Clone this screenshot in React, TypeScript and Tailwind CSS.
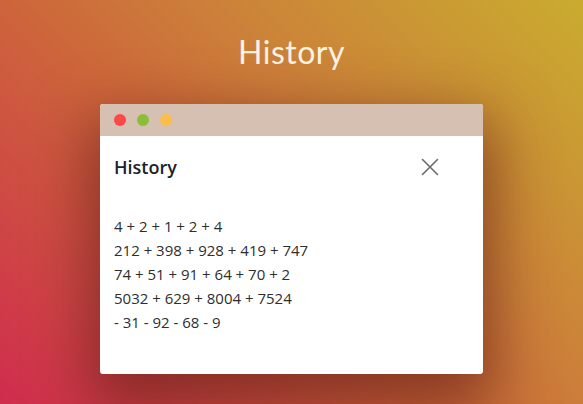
import React from "react";

const lines = [
  "4 + 2 + 1 + 2 + 4",
  "212 + 398 + 928 + 419 + 747",
  "74 + 51 + 91 + 64 + 70 + 2",
  "5032 + 629 + 8004 + 7524",
  "- 31 - 92 - 68 - 9",
];

export default function App() {
  return (
    <div
      className="w-full h-[404px] overflow-hidden flex flex-col items-center bg-[linear-gradient(45deg,#d02c4d_0%,#cd6a3a_45%,#cc7e3a_60%,#c9ac2f_100%)]"
      style={{ fontFamily: '"Open Sans", "Noto Sans", sans-serif' }}
    >
      <div
        className="pt-[33px] text-[32px] leading-[38px] text-[#fbf3e6] tracking-[0.5px]"
        style={{ fontFamily: 'Lato, "Noto Sans", sans-serif' }}
      >
        History
      </div>
      <div className="mt-[33px] w-[383px] h-[270px] rounded-[3px] overflow-hidden bg-white flex flex-col shadow-[0_25px_60px_10px_rgba(90,25,20,0.6)]">
        <div className="h-[32px] bg-[#d5c0b1] flex items-center pl-[14px] gap-[11px]">
          <span className="w-[12px] h-[12px] rounded-full bg-[#fb4848]" />
          <span className="w-[12px] h-[12px] rounded-full bg-[#8dbd37]" />
          <span className="w-[12px] h-[12px] rounded-full bg-[#fdbd4b]" />
        </div>
        <div className="flex-1 flex flex-col pl-[14px] pr-[44px] pt-[19px]">
          <div className="flex items-center justify-between h-[24px]">
            <span className="text-[18px] leading-[24px] font-semibold text-[#1c2229]">History</span>
            <svg width="18" height="18" viewBox="0 0 18 18" fill="none" stroke="#6b6b6b" strokeWidth="1.6" strokeLinecap="round">
              <path d="M1.5 1.5 L16.5 16.5 M16.5 1.5 L1.5 16.5" />
            </svg>
          </div>
          <div className="mt-[35px] flex flex-col text-[15px] leading-[24px] text-[#2e2e2e]">
            {lines.map((l) => (
              <div key={l}>{l}</div>
            ))}
          </div>
        </div>
      </div>
    </div>
  );
}
